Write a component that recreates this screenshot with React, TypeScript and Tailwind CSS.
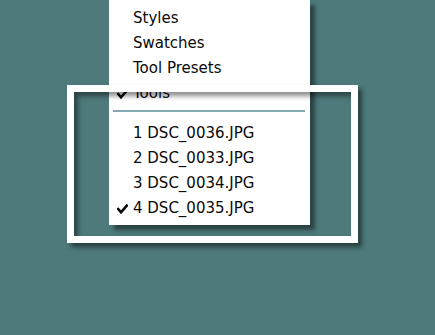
import React from "react";

const Check = () => (
  <svg width="11" height="10" viewBox="0 0 11 10" className="block">
    <path d="M1.2 5 L4 8.3 L9.8 1.6" fill="none" stroke="#0a0a0a" strokeWidth="2.6" strokeLinecap="square" />
  </svg>
);

const Item = ({ label, checked }: { label: string; checked?: boolean }) => (
  <div className="flex h-[25px] items-center">
    <div className="flex w-[24px] justify-center pl-[2px]">{checked ? <Check /> : null}</div>
    <span>{label}</span>
  </div>
);

export default function App() {
  return (
    <div
      className="relative h-[335px] w-[435px] overflow-hidden bg-[#4e7a7b]"
      style={{ fontFamily: '"DejaVu Sans", Verdana, sans-serif' }}
    >
      <div className="ml-[109px] w-[201px] bg-white pt-[6px] pb-[4px] text-[15px] text-[#0a0a0a] shadow-[5px_5px_4px_rgba(0,0,0,0.45)]">
        <Item label="Styles" />
        <Item label="Swatches" />
        <Item label="Tool Presets" />
        <Item label="Tools" checked />
        <div className="h-[15px] pl-[4px] pr-[5px] pt-[4px]">
          <div className="h-[2px] w-full bg-[#86a8b4]" />
        </div>
        <Item label="1 DSC_0036.JPG" />
        <Item label="2 DSC_0033.JPG" />
        <Item label="3 DSC_0034.JPG" />
        <Item label="4 DSC_0035.JPG" checked />
      </div>
      <div className="pointer-events-none absolute left-[67px] top-[85px] h-[158px] w-[291px] border-[7px] border-white shadow-[4px_4px_5px_rgba(0,0,0,0.5),inset_4px_4px_5px_rgba(0,0,0,0.45)]" />
    </div>
  );
}
